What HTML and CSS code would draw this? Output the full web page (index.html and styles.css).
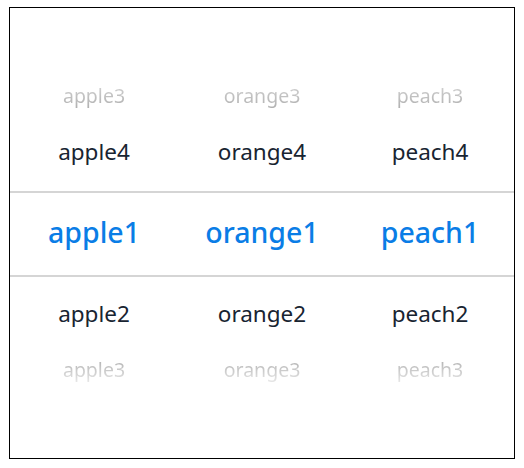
FILE: index.html
```html
<!DOCTYPE html>
<html>
<head>
<meta charset="utf-8">
<link rel="stylesheet" href="styles.css">
</head>
<body>
<div class="frame">
  <div class="picker">
    <div class="row row-far row-top"><span>apple3</span><span>orange3</span><span>peach3</span></div>
    <div class="row row-near"><span>apple4</span><span>orange4</span><span>peach4</span></div>
    <div class="row row-selected"><span>apple1</span><span>orange1</span><span>peach1</span></div>
    <div class="row row-near"><span>apple2</span><span>orange2</span><span>peach2</span></div>
    <div class="row row-far row-bottom"><span>apple3</span><span>orange3</span><span>peach3</span></div>
  </div>
</div>
</body>
</html>
```

FILE: styles.css
```css
html, body {
  margin: 0;
  padding: 0;
  background: #ffffff;
}
body {
  padding: 7px 0 0 9px;
  font-family: "Noto Sans", Roboto, sans-serif;
}
.frame {
  width: 504px;
  height: 450px;
  border: 1px solid #000000;
  background: #ffffff;
}
.picker {
  padding-top: 61px;
  display: flex;
  flex-direction: column;
}
.row {
  display: grid;
  grid-template-columns: 1fr 1fr 1fr;
  align-items: center;
  justify-items: center;
  height: 56px;
}
.row span {
  padding-bottom: 4px;
}
.row-near {
  font-size: 22.5px;
  color: #182431;
}
.row-far {
  font-size: 19.5px;
}
.row-far span {
  color: transparent;
  -webkit-background-clip: text;
  background-clip: text;
}
.row-top span {
  background-image: linear-gradient(to bottom, #d6d6d6, #a9a9a9);
}
.row-bottom span {
  background-image: linear-gradient(to bottom, #a9a9a9, #f2f2f2);
}
.row-selected {
  height: 82px;
  margin: 10px 0;
  border-top: 2px solid #d5d5d5;
  border-bottom: 2px solid #d5d5d5;
  font-size: 28.5px;
  font-weight: 500;
  color: #0a7de6;
}
```
